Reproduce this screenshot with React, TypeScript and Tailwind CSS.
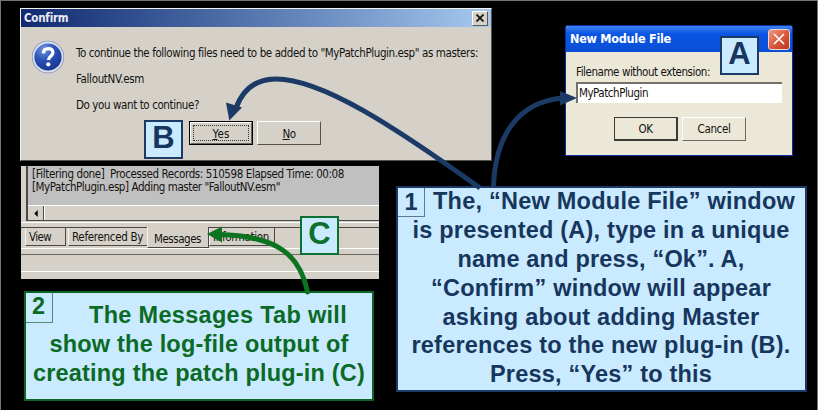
import { useLayoutEffect, useRef, type ReactNode } from "react";

const TAHOMA = "font-['DejaVu_Sans_Condensed','DejaVu_Sans',sans-serif] text-[11.5px] leading-[13px] text-[#141210]";

/* Spreads a single line of text over a given width by adjusting its tracking. */
function Fit({ w, className = "", children }: { w: number; className?: string; children: ReactNode }) {
  const ref = useRef<HTMLSpanElement>(null);
  useLayoutEffect(() => {
    const el = ref.current;
    if (!el) return;
    el.style.letterSpacing = "0px";
    const count = (el.textContent ?? "").length;
    const natural = el.getBoundingClientRect().width;
    el.style.letterSpacing = `${(w - natural) / count}px`;
  }, [w]);
  return (
    <span ref={ref} className={`inline-block w-fit whitespace-pre ${className}`}>
      {children}
    </span>
  );
}

function Badge({ children, className }: { children: string; className: string }) {
  return (
    <div
      className={`absolute flex h-[39px] w-[39px] items-center justify-center border-2 bg-[#c9eaff] pb-[5px] font-['Liberation_Sans',Arial,sans-serif] text-[31px] leading-none font-bold ${className}`}
    >
      {children}
    </div>
  );
}

function ConfirmWindow() {
  return (
    <section className="absolute top-2 left-5 flex h-[153px] w-[472px] flex-col border border-t-[#f4f2ee] border-r-[#55524e] border-b-[#55524e] border-l-[#f4f2ee] bg-[#d5d1c9]">
      <header className="flex h-[18px] items-center justify-between bg-linear-to-r from-[#12296f] to-[#a6caf0] pr-[3px] pl-[3px]">
        <Fit w={44} className="font-['DejaVu_Sans_Condensed'] text-[11.5px] leading-[16px] font-bold text-[#e9ecf5]">
          Confirm
        </Fit>
        <div className="flex h-[15px] w-4 items-center justify-center border border-t-white border-r-[#5b5955] border-b-[#5b5955] border-l-white bg-[#d5d1c9]">
          <svg viewBox="0 0 8 8" className="h-2 w-2">
            <path d="M0.5 0.5 7.5 7.5M7.5 0.5 0.5 7.5" stroke="#111" strokeWidth="1.8" />
          </svg>
        </div>
      </header>
      <div className="flex pt-[13px] pl-[10px]">
        <svg viewBox="0 0 34 34" className="h-[34px] w-[34px]">
          <defs>
            <radialGradient id="orb" cx="35%" cy="22%" r="80%">
              <stop offset="0" stopColor="#6f95e0" />
              <stop offset="0.5" stopColor="#2a52b8" />
              <stop offset="1" stopColor="#17378f" />
            </radialGradient>
          </defs>
          <circle cx="17" cy="17" r="16.2" fill="#8796b4" />
          <circle cx="17" cy="17" r="15.4" fill="#d9dfee" />
          <circle cx="17" cy="17" r="13.6" fill="url(#orb)" />
          <path d="M12.400 13.400c.2-3.200 2-4.700 4.800-4.700 2.900 0 4.700 1.500 4.700 4 0 3.500-4.400 3.600-4.400 7.300" fill="none" stroke="#fff" strokeWidth="3.300" />
          <circle cx="17.300" cy="24.300" r="2.100" fill="#fff" />
        </svg>
        <div className={`flex flex-col gap-[13px] pt-[7px] pl-[11px] ${TAHOMA}`}>
          <Fit w={402}>To continue the following files need to be added to "MyPatchPlugin.esp" as masters:</Fit>
          <Fit w={68}>FalloutNV.esm</Fit>
          <Fit w={123}>Do you want to continue?</Fit>
        </div>
      </div>
      <div className={`mt-[9px] flex gap-[4px] pl-[168px] ${TAHOMA}`}>
        <div className="h-[24px] w-[64px] border border-black">
          <div className="h-full border border-t-white border-r-[#6a6763] border-b-[#6a6763] border-l-white p-[2px]">
            <div className="flex h-full items-center justify-center border border-dotted border-[#333] pt-[2px]">
              <Fit w={17}><u>Y</u>es</Fit>
            </div>
          </div>
        </div>
        <div className="flex h-[24px] w-[64px] items-center justify-center border border-t-white border-r-[#55524e] border-b-[#55524e] border-l-white pt-[2px]">
          <Fit w={13}><u>N</u>o</Fit>
        </div>
      </div>
    </section>
  );
}

function ModuleWindow() {
  return (
    <section className="absolute top-[25px] left-[565px] flex h-[131px] w-[228px] flex-col rounded-t-[3px] border border-[#0a2fa8] bg-[#ebe8d8]">
      <header className="flex h-[26px] items-center justify-between rounded-t-[2px] bg-linear-to-b from-[#3c83f2] via-[#0b55e4] via-30% to-[#0a4fd6] pr-[2px] pl-[4px]">
        <Fit w={101} className="font-['DejaVu_Sans_Condensed'] text-[12.5px] leading-[16px] font-bold text-white">
          New Module File
        </Fit>
        <div className="flex h-[21px] w-[22px] items-center justify-center rounded-[3px] border border-[#f3d5cf] bg-linear-to-br from-[#ea9a82] via-[#dc5a3c] to-[#b8361c]">
          <svg viewBox="0 0 12 12" className="h-3 w-3">
            <path d="M1 1 11 11M11 1 1 11" stroke="#fff" strokeWidth="1.700" />
          </svg>
        </div>
      </header>
      <div className={`flex flex-col pt-[14px] pl-[10px] ${TAHOMA}`}>
        <Fit w={134}>Filename without extension:</Fit>
        <div className="mt-[3px] flex h-[21px] w-[206px] items-center border-t-2 border-l-2 border-t-[#73716b] border-l-[#73716b] bg-white pl-px">
          <Fit w={69}>MyPatchPlugin</Fit>
        </div>
        <div className="mt-[14px] flex gap-[4px] pl-[38px]">
          <div className="flex h-[24px] w-[64px] items-center justify-center border border-r-2 border-b-2 border-[#3b3a35] pt-[2px]">
            <Fit w={14}>OK</Fit>
          </div>
          <div className="flex h-[24px] w-[64px] items-center justify-center border border-t-white border-r-[#6c6a62] border-b-[#6c6a62] border-l-white pt-px">
            <Fit w={33}>Cancel</Fit>
          </div>
        </div>
      </div>
    </section>
  );
}

function MessagesPanel() {
  const tab = "flex items-center border-r border-b border-l border-r-[#4a4744] border-b-[#4a4744] border-l-[#f4f2ee]";
  return (
    <section className={`absolute top-[166px] left-[21px] flex h-[113px] w-[358px] flex-col bg-[#d5d1c9] ${TAHOMA}`}>
      <div className="ml-[5px] flex h-[55px] flex-col border-b border-l-2 border-[#4a4744] bg-[#c0c0c0]">
        <div className="flex h-[39px] flex-col pt-[2px] pl-[4px]">
          <Fit w={312}>[Filtering done]  Processed Records: 510598 Elapsed Time: 00:08</Fit>
          <Fit w={248}>[MyPatchPlugin.esp] Adding master "FalloutNV.esm"</Fit>
        </div>
        <div className="flex h-[15px] border-t border-white bg-[#d5d1c9]">
          <div className="flex w-4 items-center justify-center border-r border-[#4a4744]">
            <svg viewBox="0 0 4 8" className="h-[7px] w-1">
              <path d="M4 0V8L0 4Z" fill="#000" />
            </svg>
          </div>
          <div className="flex-1 border-l border-white" />
        </div>
      </div>
      <div className="mt-px h-[5px] border-t border-white" />
      <div className="flex h-[22px] items-start border-b border-white">
        <div className="flex h-[19px] w-[126px] gap-[2px] border-t border-[#4a4744] pl-[4px]">
          <div className={`${tab} w-[41px] pt-[2px] pl-[3px]`}><Fit w={22}>View</Fit></div>
          <div className={`${tab} w-[79px] border-r-0 pt-[2px] pl-[3px]`}><Fit w={71}>Referenced By</Fit></div>
        </div>
        <div className={`${tab} h-[21px] w-[62px] pt-[5px] pl-[6px]`}><Fit w={47}>Messages</Fit></div>
        <div className="flex h-[19px] flex-1 border-t border-[#4a4744]">
          <div className={`${tab} w-[66px] pt-[2px] pl-[3px]`}><Fit w={56}>Information</Fit></div>
        </div>
      </div>
      <div className="mt-[5px] h-[18px] border-t border-b border-t-[#6d6a66] border-b-white" />
    </section>
  );
}

function NoteLine({ w, shift = "", children }: { w: number; shift?: string; children: string }) {
  return (
    <div className={`flex h-[28.800px] shrink-0 items-center justify-center ${shift}`}>
      <Fit w={w}>{children}</Fit>
    </div>
  );
}

const NOTE = "absolute flex flex-col border-2 bg-[#c9eaff] font-['Liberation_Sans',Arial,sans-serif] text-[23.500px] leading-[28px] font-bold";

function StepOne() {
  return (
    <section className={`${NOTE} top-[186px] left-[396px] h-[206px] w-[411px] border-[#1b3a66] text-[#17365d]`}>
      <div className="absolute top-0 left-0 flex h-[29px] w-[27px] items-center justify-center border-r border-b border-[#5d7894] pb-px">1</div>
      <div className="-mt-px flex flex-col pr-px">
        <NoteLine w={362} shift="pl-[26px]">The, “New Module File” window</NoteLine>
        <NoteLine w={377}>is presented (A), type in a unique</NoteLine>
        <NoteLine w={287}>name and press, “Ok”. A,</NoteLine>
        <NoteLine w={340}>“Confirm” window will appear</NoteLine>
        <NoteLine w={317}>asking about adding Master</NoteLine>
        <NoteLine w={379}>references to the new plug-in (B).</NoteLine>
        <NoteLine w={222}>Press, “Yes” to this</NoteLine>
      </div>
    </section>
  );
}

function StepTwo() {
  return (
    <section className={`${NOTE} top-[291px] left-[24px] h-[110px] w-[350px] border-[#0d6427] pt-[8px] text-[#0b6a25]`}>
      <div className="absolute top-0 left-0 flex h-[30px] w-[27px] items-center justify-center border-r border-b border-[#4d8f74] pr-px pb-[3px]">2</div>
      <div className="flex flex-col">
        <NoteLine w={258} shift="pl-[38px]">The Messages Tab will</NoteLine>
        <NoteLine w={299}>show the log-file output of</NoteLine>
        <NoteLine w={332}>creating the patch plug-in (C)</NoteLine>
      </div>
    </section>
  );
}

function Arrows() {
  return (
    <svg viewBox="0 0 818 410" className="pointer-events-none absolute inset-0 h-[410px] w-[818px]" fill="none">
      <g stroke="#1b3a66" strokeWidth="5">
        <path d="M480 188C395 127 322 79 276 79C253 79 242 92 236 108" />
        <path d="M493.500 187C495 138 516 102 563 98" />
      </g>
      <path d="M229.300 120.500 226 102.500 242 107.500Z" fill="#1b3a66" />
      <path d="M577 98 560 91V105.500Z" fill="#1b3a66" />
      <path d="M307.500 292C300 255 278 236 219 234.500" stroke="#0c7420" strokeWidth="5" strokeLinecap="round" />
      <path d="M207 234 222 226.500V242.500Z" fill="#0c7420" />
    </svg>
  );
}

export default function App() {
  return (
    <main className="relative h-[410px] w-[818px] overflow-hidden border-t border-r border-l border-[#6e7678] bg-black">
      <div className="absolute -top-px -left-px h-[410px] w-[818px]">
        <ConfirmWindow />
        <ModuleWindow />
        <MessagesPanel />
        <StepOne />
        <StepTwo />
        <Badge className="top-[36px] left-[720px] border-[#1b3a66] text-[#17365d]">A</Badge>
        <Badge className="top-[120px] left-[144px] border-[#1b3a66] text-[#17365d]">B</Badge>
        <Badge className="top-[216px] left-[300px] border-[#0d7030] text-[#0d7030]">C</Badge>
        <Arrows />
      </div>
    </main>
  );
}
